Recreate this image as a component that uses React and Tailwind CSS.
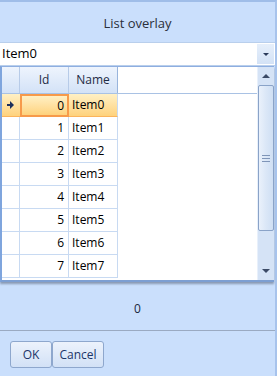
import React from "react";

const rows = [0, 1, 2, 3, 4, 5, 6, 7];

function Grid() {
  return (
    <div className="flex-1 min-w-0 bg-white">
      {/* header */}
      <div className="flex h-[27px] border-b border-[#a9c2e4]">
        <div className="w-[18px] border-r border-[#b7cbe8] bg-gradient-to-b from-[#eef4fd] to-[#d3e2f7]" />
        <div className="w-[49px] border-r border-[#b7cbe8] bg-gradient-to-b from-[#eef4fd] to-[#d3e2f7] flex items-center justify-center text-[12px] text-[#1e2b45]">
          Id
        </div>
        <div className="w-[49px] border-r border-[#98b4dc] bg-gradient-to-b from-[#eef4fd] to-[#d3e2f7] flex items-center justify-center text-[12px] text-[#1e2b45]">
          Name
        </div>
      </div>
      {rows.map((r) => (
        <div key={r} className="flex h-[23px]">
          {r === 0 ? (
            <>
              <div className="w-[18px] flex items-center justify-center pr-[2px] border-b border-[#fbb45c] bg-gradient-to-b from-[#fff0c4] to-[#fed27c]">
                <svg width="7" height="8" viewBox="0 0 7 8">
                  <path d="M3 0 L7 4 L3 8 Z M0 3 H4 V5 H0 Z" fill="#1c2f5c" />
                </svg>
              </div>
              <div className="w-[49px] flex items-center justify-end pr-[3px] border-2 border-[#f79a4a] bg-gradient-to-b from-[#fff0c4] to-[#fed27c] text-[12px] text-black">
                0
              </div>
              <div className="w-[49px] flex items-center pl-[3px] border-b border-[#fbb45c] border-r border-r-[#c8daf2] bg-gradient-to-b from-[#fff0c4] to-[#fed27c] text-[12px] text-black">
                Item0
              </div>
            </>
          ) : (
            <>
              <div className="w-[18px] border-r border-b border-[#c8daf2]" />
              <div className="w-[49px] flex items-center justify-end pr-[4px] border-r border-b border-[#c8daf2] text-[12px] text-black">
                {r}
              </div>
              <div className="w-[49px] flex items-center pl-[3px] border-r border-b border-[#c8daf2] text-[12px] text-black">
                Item{r}
              </div>
            </>
          )}
        </div>
      ))}
    </div>
  );
}

function ScrollBar() {
  return (
    <div className="w-[17px] flex flex-col bg-[#d5e3f6] border-l border-[#e8f0fb]">
      <div className="h-[18px] flex items-center justify-center">
        <div className="w-0 h-0 border-l-[4px] border-r-[4px] border-b-[4px] border-l-transparent border-r-transparent border-b-[#3b4a66]" />
      </div>
      <div className="h-[146px] rounded-[2px] border border-[#8aa3c8] bg-gradient-to-r from-[#eaf1fb] via-[#dbe7f7] to-[#cfdff4] flex flex-col items-center justify-center gap-[2px]">
        <div className="w-[8px] h-[1px] bg-[#7f95b8]" />
        <div className="w-[8px] h-[1px] bg-[#7f95b8]" />
        <div className="w-[8px] h-[1px] bg-[#7f95b8]" />
      </div>
      <div className="flex-1" />
      <div className="h-[18px] flex items-center justify-center">
        <div className="w-0 h-0 border-l-[4px] border-r-[4px] border-t-[4px] border-l-transparent border-r-transparent border-t-[#3b4a66]" />
      </div>
    </div>
  );
}

export default function App() {
  return (
    <div
      className="relative w-[277px] h-[376px] overflow-hidden bg-[#cadffc] border-t-2 border-[#9fbde8] border-r-2 border-r-[#a7c3ec] flex flex-col"
      style={{ fontFamily: '"Open Sans", "Noto Sans", sans-serif' }}
    >
      <div className="h-[40px] flex items-center justify-center pt-[3px] text-[13px] text-[#2a2f3a]">
        List overlay
      </div>

      {/* combo */}
      <div className="h-[24px] flex bg-white border-y border-[#b9cfec]">
        <div className="flex-1 flex items-center pl-[2px] text-[13px] text-black">
          Item0
        </div>
        <div className="w-[17px] my-[1px] mr-[1px] bg-gradient-to-b from-[#e6effb] to-[#d3e2f6] flex items-center justify-center">
          <div className="w-0 h-0 border-l-[3px] border-r-[3px] border-t-[3px] border-l-transparent border-r-transparent border-t-[#2b3a5a]" />
        </div>
      </div>

      {/* popup overlay */}
      <div className="absolute left-0 top-[64px] w-[274px] h-[216px] flex bg-white border-t border-[#8eaee0] border-l-2 border-l-[#7fa5dd] border-b-2 border-b-[#7d9fd2] shadow-[0_2px_2px_rgba(60,70,90,0.45)]">
        <Grid />
        <ScrollBar />
      </div>

      <div className="h-[216px]" />
      <div className="h-[48px] flex items-center justify-center pt-[5px] text-[12px] text-[#1b2740]">
        0
      </div>
      <div className="border-t border-[#9aaac2]" />
      <div className="flex-1 flex items-start pl-[10px] pt-[10px]">
        <button className="w-[42px] h-[27px] rounded-[3px] border border-[#8ea7cd] bg-gradient-to-b from-[#ecf2fc] to-[#d2e1f6] text-[12px] text-[#1c3568]">
          OK
        </button>
        <button className="w-[52px] h-[27px] rounded-[3px] border border-[#8ea7cd] bg-gradient-to-b from-[#ecf2fc] to-[#d2e1f6] text-[12px] text-[#1c3568]">
          Cancel
        </button>
      </div>
    </div>
  );
}
